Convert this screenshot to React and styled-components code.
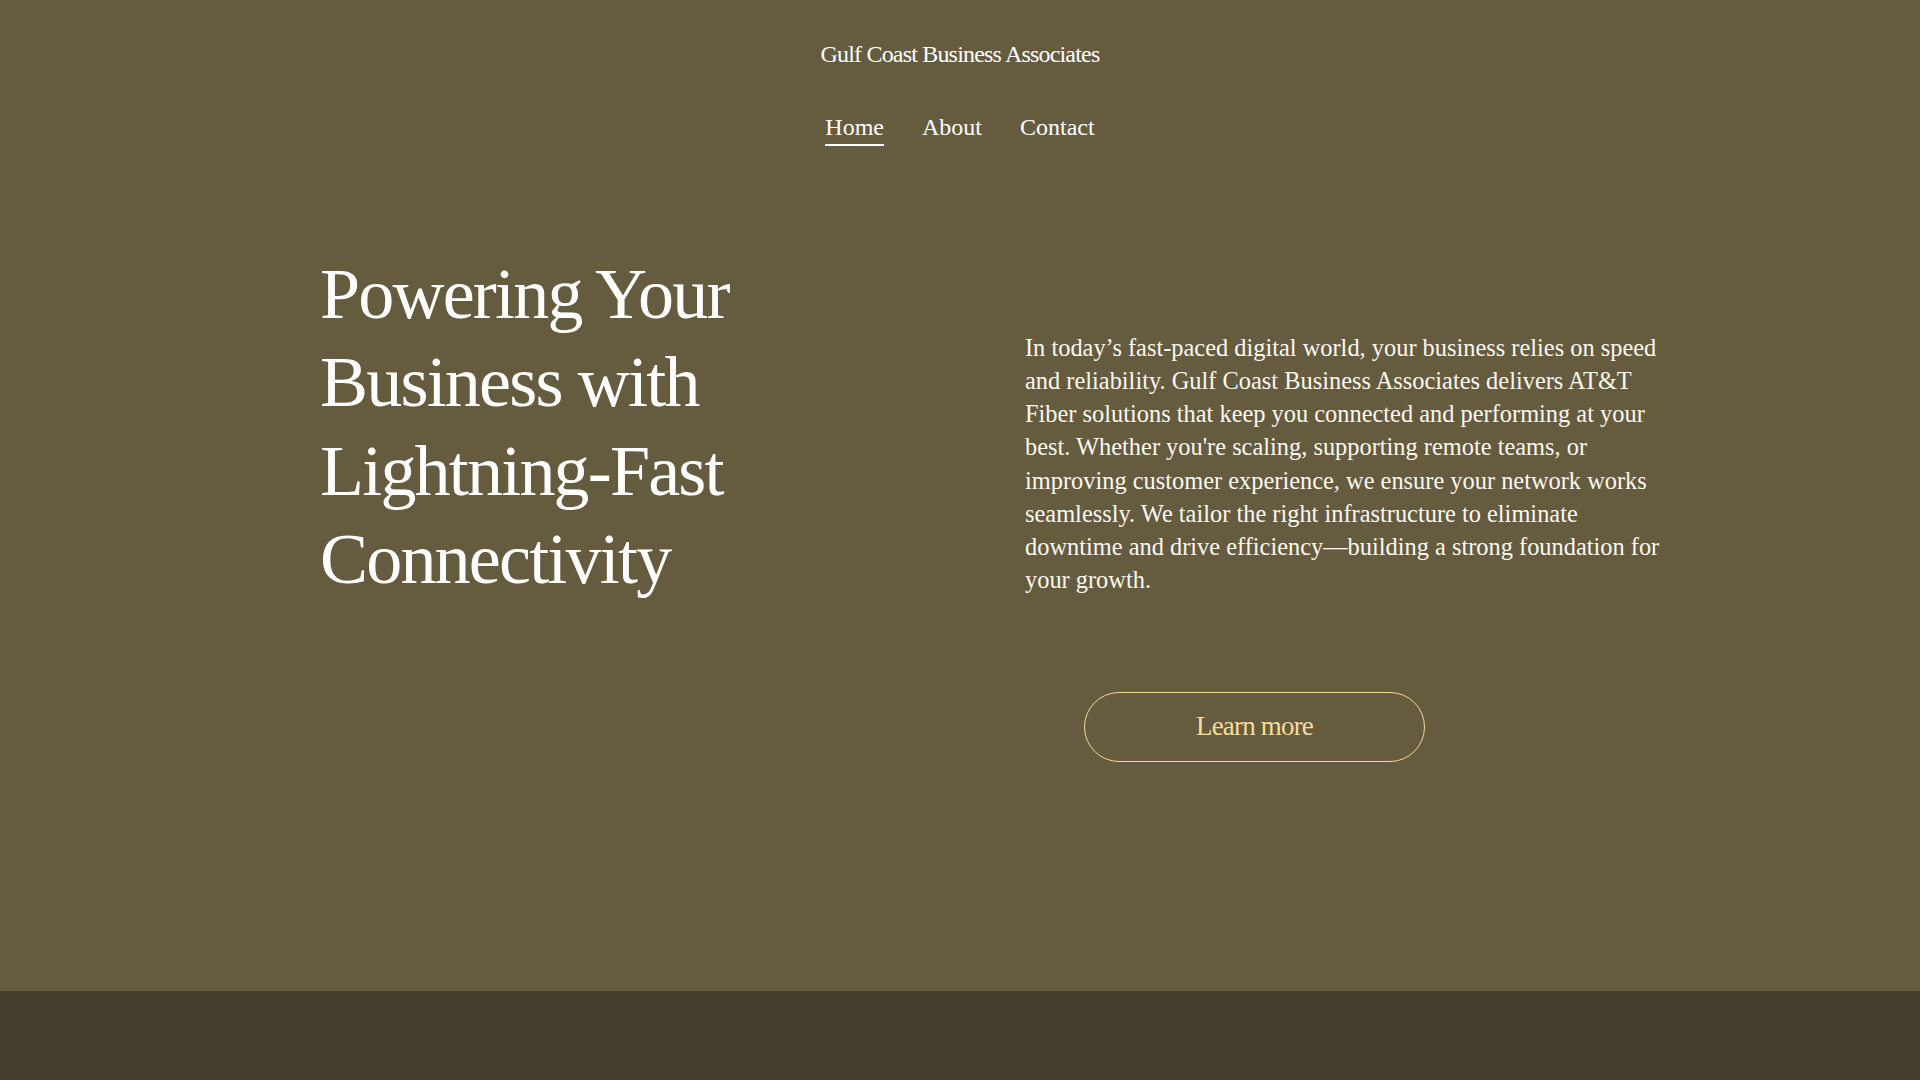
import React from "react";
import styled, { createGlobalStyle } from "styled-components";

const GlobalStyle = createGlobalStyle`
  html, body {
    margin: 0;
    padding: 0;
    background: #473f2d;
  }
  body {
    font-family: "Liberation Serif", "Times New Roman", serif;
    -webkit-font-smoothing: antialiased;
  }
  * {
    box-sizing: border-box;
  }
`;

const navItems = [
  { label: "Home", active: true },
  { label: "About" },
  { label: "Contact" },
];

const App = () => {
  return (
    <>
      <GlobalStyle />
      <Page>
        <Top>
          <Header>
            <SiteTitle>Gulf Coast Business Associates</SiteTitle>
            <Nav>
              {navItems.map((item) => (
                <NavLink key={item.label} href="#" $active={item.active}>
                  {item.label}
                </NavLink>
              ))}
            </Nav>
          </Header>

          <Hero>
            <Heading>
              Powering Your Business with Lightning-Fast Connectivity
            </Heading>
            <RightColumn>
              <Text>
                In today’s fast-paced digital world, your business relies on
                speed and reliability. Gulf Coast Business Associates delivers
                AT&amp;T Fiber solutions that keep you connected and performing
                at your best. Whether you're scaling, supporting remote teams,
                or improving customer experience, we ensure your network works
                seamlessly. We tailor the right infrastructure to eliminate
                downtime and drive efficiency—building a strong foundation for
                your growth.
              </Text>
              <LearnButton href="#">Learn more</LearnButton>
            </RightColumn>
          </Hero>
        </Top>
        <Footer />
      </Page>
    </>
  );
};

export default App;

const Page = styled.div`
  display: flex;
  flex-direction: column;
  min-height: 100vh;
`;

const Top = styled.div`
  background: #655b3f;
  height: 991px;
  color: #ffffff;
`;

const Header = styled.header`
  display: flex;
  flex-direction: column;
  align-items: center;
  padding-top: 40px;
`;

const SiteTitle = styled.div`
  font-size: 24px;
  line-height: 1.2;
  letter-spacing: -0.034em;
  color: #ffffff;
`;

const Nav = styled.nav`
  display: flex;
  gap: 38px;
  margin-top: 44px;
`;

const NavLink = styled.a`
  font-size: 24px;
  line-height: 1.2;
  color: #ffffff;
  text-decoration: none;
  padding-bottom: 2px;
  border-bottom: 2px solid
    ${({ $active }) => ($active ? "#ffffff" : "transparent")};
`;

const Hero = styled.section`
  display: grid;
  grid-template-columns: 585px 1fr;
  column-gap: 120px;
  padding: 104px 220px 0 320px;
`;

const Heading = styled.h1`
  margin: 0;
  font-size: 72px;
  font-weight: 400;
  line-height: 88.5px;
  letter-spacing: -0.025em;
  color: #ffffff;
`;

const RightColumn = styled.div`
  display: flex;
  flex-direction: column;
  align-items: flex-start;
  padding-top: 81px;
`;

const Text = styled.p`
  margin: 0;
  max-width: 642px;
  font-size: 24.4px;
  line-height: 33.25px;
  color: #fbf8f0;
`;

const LearnButton = styled.a`
  display: flex;
  align-items: center;
  justify-content: center;
  width: 341px;
  height: 70px;
  margin-top: 95px;
  margin-left: 59px;
  border: 1px solid #f2d992;
  border-radius: 35px;
  font-size: 27px;
  letter-spacing: -0.03em;
  color: #f6dc9c;
  text-decoration: none;
`;

const Footer = styled.footer`
  flex: 1;
  background: #473f2d;
`;
